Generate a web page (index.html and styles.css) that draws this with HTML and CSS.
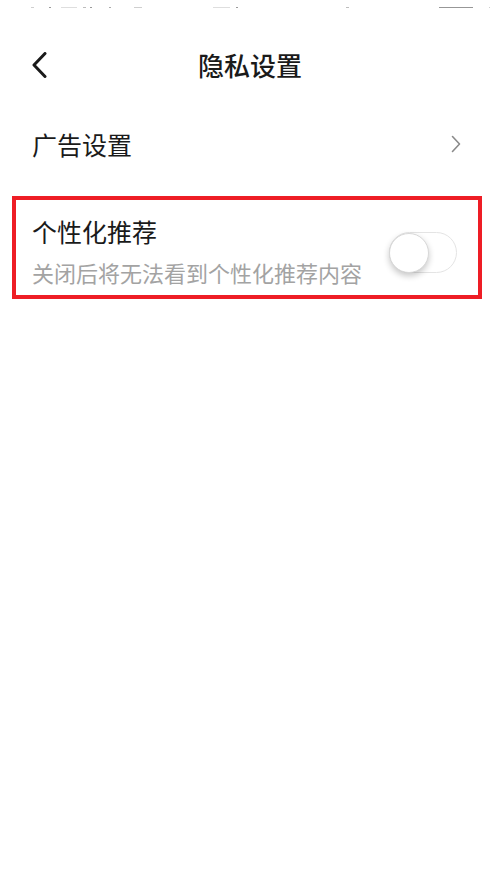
FILE: index.html
```html
<!DOCTYPE html>
<html lang="zh-CN">
<head>
<meta charset="utf-8">
<title>隐私设置</title>
<link rel="stylesheet" href="styles.css">
</head>
<body>
<div class="page">
  <div class="statusbar"><div class="status-trace"></div></div>
  <header class="navbar">
    <div class="nav-left">
      <svg class="back-icon" width="18" height="26" viewBox="0 0 18 26" aria-hidden="true">
        <path d="M14 1.5 L3 13 L14 24.5" fill="none" stroke="#1a1a1a" stroke-width="3" stroke-linecap="round" stroke-linejoin="round"/>
      </svg>
    </div>
    <h1 class="nav-title">隐私设置</h1>
    <div class="nav-right"></div>
  </header>
  <div class="row-link">
    <span class="row-label">广告设置</span>
    <svg class="chevron" width="10" height="18" viewBox="0 0 10 18" aria-hidden="true">
      <path d="M1.5 1.5 L8.5 9 L1.5 16.5" fill="none" stroke="#8a8a8a" stroke-width="1.6" stroke-linecap="round" stroke-linejoin="round"/>
    </svg>
  </div>
  <div class="highlight">
    <div class="toggle-row">
      <div class="toggle-text">
        <div class="toggle-title">个性化推荐</div>
        <div class="toggle-desc">关闭后将无法看到个性化推荐内容</div>
      </div>
      <div class="switch">
        <div class="knob"></div>
      </div>
    </div>
  </div>
</div>
</body>
</html>
```
FILE: styles.css
```css
* {
  box-sizing: border-box;
}
html, body {
  margin: 0;
  padding: 0;
  background: #ffffff;
}
body {
  font-family: "Noto Sans CJK SC", "Noto Sans", sans-serif;
  color: #1a1a1a;
}
.page {
  width: 500px;
  min-height: 888px;
  background: #ffffff;
}
.statusbar {
  height: 30px;
  padding-top: 7px;
}
.status-trace {
  height: 1px;
  background: linear-gradient(to right,
    transparent 0 31px, #cfcfcf 31px 34px,
    transparent 34px 49px, #9a9a9a 49px 51px,
    transparent 51px 61px, #dedede 61px 77px,
    transparent 77px 83px, #bdbdbd 83px 86px,
    transparent 86px 90px, #9a9a9a 90px 92px,
    transparent 92px 109px, #ababab 109px 111px,
    transparent 111px 134px, #cfcfcf 134px 142px,
    transparent 142px 213px, #dedede 213px 230px,
    transparent 230px 236px, #9a9a9a 236px 238px,
    transparent 238px 346px, #bdbdbd 346px 349px,
    transparent 349px 439px, #979797 439px 473px,
    transparent 473px 489px, #cfcfcf 489px 490px,
    transparent 490px);
}
.navbar {
  height: 70px;
  display: grid;
  grid-template-columns: 1fr auto 1fr;
  align-items: center;
}
.nav-left {
  padding-left: 31px;
  display: flex;
  align-items: center;
}
.back-icon {
  display: block;
}
.nav-title {
  margin: 0;
  font-size: 26px;
  font-weight: 500;
  line-height: 36px;
  color: #1a1a1a;
  letter-spacing: 0;
}
.row-link {
  height: 88px;
  display: flex;
  align-items: center;
  justify-content: space-between;
  padding: 0 39px 0 32px;
}
.row-label {
  font-size: 25px;
  line-height: 30px;
  color: #1a1a1a;
}
.chevron {
  display: block;
}
.highlight {
  margin: 8px 18px 0 12px;
  border: 4px solid #ee1d25;
  height: 103px;
}
.toggle-row {
  display: flex;
  align-items: center;
  justify-content: space-between;
  padding: 16px 21px 8px 16px;
}
.toggle-title {
  font-size: 25px;
  line-height: 30px;
  color: #1a1a1a;
}
.toggle-desc {
  margin-top: 11px;
  font-size: 22px;
  line-height: 30px;
  color: #a3a3a3;
}
.switch {
  position: relative;
  width: 68px;
  height: 41px;
  border: 1.5px solid #e4e4e4;
  border-radius: 21px;
  background: #ffffff;
  margin-top: 2px;
}
.knob {
  position: absolute;
  left: -1.5px;
  top: -0.5px;
  width: 40px;
  height: 40px;
  border-radius: 50%;
  background: #ffffff;
  border: 1px solid #d8d8d8;
  box-shadow: 0 3px 6px rgba(0, 0, 0, 0.22);
}
```
